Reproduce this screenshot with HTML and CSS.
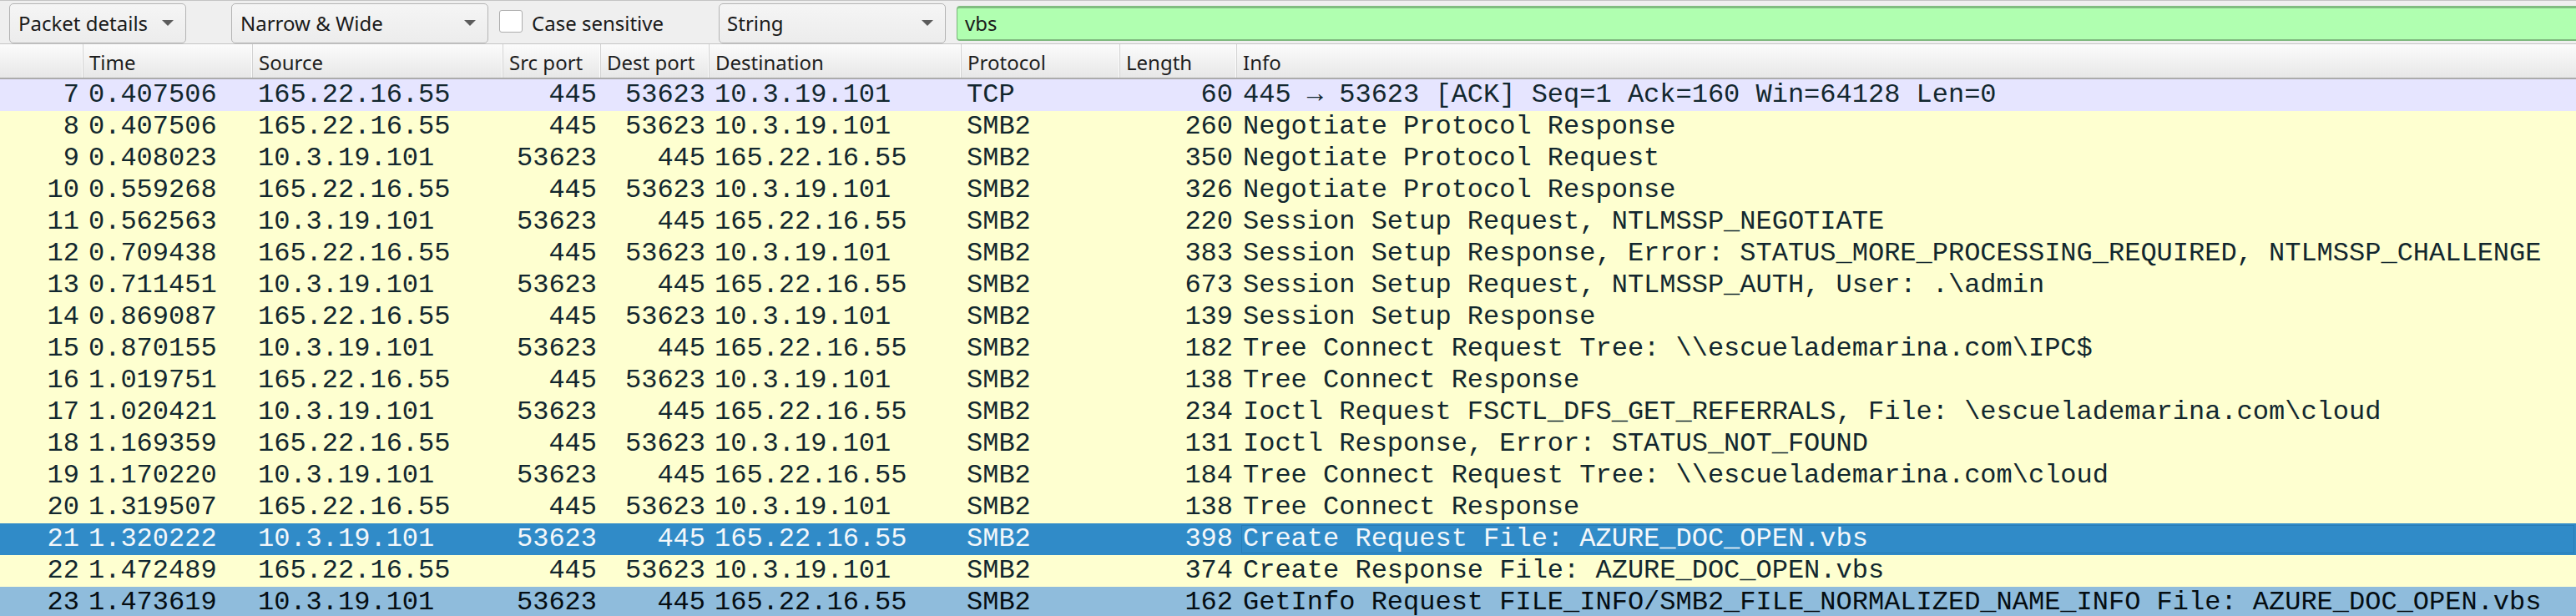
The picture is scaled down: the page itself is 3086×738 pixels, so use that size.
FILE: index.html
```html
<!DOCTYPE html>
<html>
<head>
<meta charset="utf-8">
<link rel="stylesheet" href="styles.css">
</head>
<body>
<div class="toolbar">
  <div class="combo combo-details"><span>Packet details</span><i class="arrow"></i></div>
  <div class="combo combo-charset"><span>Narrow &amp; Wide</span><i class="arrow"></i></div>
  <label class="check"><span class="box"></span><span>Case sensitive</span></label>
  <div class="combo combo-type"><span>String</span><i class="arrow"></i></div>
  <div class="search">vbs</div>
</div>
<div class="list">
  <div class="hdr cols">
    <div class="h"></div><div class="h">Time</div><div class="h">Source</div><div class="h">Src port</div><div class="h">Dest port</div><div class="h">Destination</div><div class="h">Protocol</div><div class="h">Length</div><div class="h">Info</div>
  </div>
  <div class="row cols tcp"><div class="r">7</div><div>0.407506</div><div>165.22.16.55</div><div class="r">445</div><div class="r">53623</div><div>10.3.19.101</div><div>TCP</div><div class="r">60</div><div class="info">445 → 53623 [ACK] Seq=1 Ack=160 Win=64128 Len=0</div></div>
  <div class="row cols smb"><div class="r">8</div><div>0.407506</div><div>165.22.16.55</div><div class="r">445</div><div class="r">53623</div><div>10.3.19.101</div><div>SMB2</div><div class="r">260</div><div class="info">Negotiate Protocol Response</div></div>
  <div class="row cols smb"><div class="r">9</div><div>0.408023</div><div>10.3.19.101</div><div class="r">53623</div><div class="r">445</div><div>165.22.16.55</div><div>SMB2</div><div class="r">350</div><div class="info">Negotiate Protocol Request</div></div>
  <div class="row cols smb"><div class="r">10</div><div>0.559268</div><div>165.22.16.55</div><div class="r">445</div><div class="r">53623</div><div>10.3.19.101</div><div>SMB2</div><div class="r">326</div><div class="info">Negotiate Protocol Response</div></div>
  <div class="row cols smb"><div class="r">11</div><div>0.562563</div><div>10.3.19.101</div><div class="r">53623</div><div class="r">445</div><div>165.22.16.55</div><div>SMB2</div><div class="r">220</div><div class="info">Session Setup Request, NTLMSSP_NEGOTIATE</div></div>
  <div class="row cols smb"><div class="r">12</div><div>0.709438</div><div>165.22.16.55</div><div class="r">445</div><div class="r">53623</div><div>10.3.19.101</div><div>SMB2</div><div class="r">383</div><div class="info">Session Setup Response, Error: STATUS_MORE_PROCESSING_REQUIRED, NTLMSSP_CHALLENGE</div></div>
  <div class="row cols smb"><div class="r">13</div><div>0.711451</div><div>10.3.19.101</div><div class="r">53623</div><div class="r">445</div><div>165.22.16.55</div><div>SMB2</div><div class="r">673</div><div class="info">Session Setup Request, NTLMSSP_AUTH, User: .\admin</div></div>
  <div class="row cols smb"><div class="r">14</div><div>0.869087</div><div>165.22.16.55</div><div class="r">445</div><div class="r">53623</div><div>10.3.19.101</div><div>SMB2</div><div class="r">139</div><div class="info">Session Setup Response</div></div>
  <div class="row cols smb"><div class="r">15</div><div>0.870155</div><div>10.3.19.101</div><div class="r">53623</div><div class="r">445</div><div>165.22.16.55</div><div>SMB2</div><div class="r">182</div><div class="info">Tree Connect Request Tree: \\escuelademarina.com\IPC$</div></div>
  <div class="row cols smb"><div class="r">16</div><div>1.019751</div><div>165.22.16.55</div><div class="r">445</div><div class="r">53623</div><div>10.3.19.101</div><div>SMB2</div><div class="r">138</div><div class="info">Tree Connect Response</div></div>
  <div class="row cols smb"><div class="r">17</div><div>1.020421</div><div>10.3.19.101</div><div class="r">53623</div><div class="r">445</div><div>165.22.16.55</div><div>SMB2</div><div class="r">234</div><div class="info">Ioctl Request FSCTL_DFS_GET_REFERRALS, File: \escuelademarina.com\cloud</div></div>
  <div class="row cols smb"><div class="r">18</div><div>1.169359</div><div>165.22.16.55</div><div class="r">445</div><div class="r">53623</div><div>10.3.19.101</div><div>SMB2</div><div class="r">131</div><div class="info">Ioctl Response, Error: STATUS_NOT_FOUND</div></div>
  <div class="row cols smb"><div class="r">19</div><div>1.170220</div><div>10.3.19.101</div><div class="r">53623</div><div class="r">445</div><div>165.22.16.55</div><div>SMB2</div><div class="r">184</div><div class="info">Tree Connect Request Tree: \\escuelademarina.com\cloud</div></div>
  <div class="row cols smb"><div class="r">20</div><div>1.319507</div><div>165.22.16.55</div><div class="r">445</div><div class="r">53623</div><div>10.3.19.101</div><div>SMB2</div><div class="r">138</div><div class="info">Tree Connect Response</div></div>
  <div class="row cols sel"><div class="r">21</div><div>1.320222</div><div>10.3.19.101</div><div class="r">53623</div><div class="r">445</div><div>165.22.16.55</div><div>SMB2</div><div class="r">398</div><div class="info">Create Request File: AZURE_DOC_OPEN.vbs</div></div>
  <div class="row cols smb"><div class="r">22</div><div>1.472489</div><div>165.22.16.55</div><div class="r">445</div><div class="r">53623</div><div>10.3.19.101</div><div>SMB2</div><div class="r">374</div><div class="info">Create Response File: AZURE_DOC_OPEN.vbs</div></div>
  <div class="row cols rel"><div class="r">23</div><div>1.473619</div><div>10.3.19.101</div><div class="r">53623</div><div class="r">445</div><div>165.22.16.55</div><div>SMB2</div><div class="r">162</div><div class="info">GetInfo Request FILE_INFO/SMB2_FILE_NORMALIZED_NAME_INFO File: AZURE_DOC_OPEN.vbs</div></div>
</div>
</body>
</html>
```
FILE: styles.css
```css
html, body {
  margin: 0;
  padding: 0;
  background: #efefef;
  overflow: hidden;
  height: 738px;
}
body {
  font-family: "Noto Sans", "Open Sans", sans-serif;
  color: #1a1a1a;
}
.toolbar {
  box-sizing: border-box;
  height: 52px;
  border-top: 1px solid #c4c4c4;
  padding: 2px 0 0 11px;
  display: flex;
  align-items: center;
  background: #efefef;
  font-size: 24px;
  overflow: hidden;
}
.combo {
  box-sizing: border-box;
  height: 48px;
  border: 1px solid #b4b4b4;
  border-radius: 5px;
  background: linear-gradient(#f5f5f5, #ececec);
  display: flex;
  align-items: center;
  justify-content: space-between;
  padding: 0 14px 0 10px;
  line-height: 33px;
}
.arrow {
  width: 0;
  height: 0;
  border-left: 7px solid transparent;
  border-right: 7px solid transparent;
  border-top: 7px solid #5c5c5c;
}
.combo-details { width: 212px; }
.combo-charset { width: 308px; margin-left: 54px; }
.combo-type { width: 272px; margin-left: 66px; padding-left: 9px; }
.check {
  display: flex;
  align-items: center;
  margin-left: 13px;
  line-height: 33px;
}
.box {
  box-sizing: border-box;
  width: 28px;
  height: 27px;
  border: 1px solid #adadad;
  border-radius: 3px;
  background: #fff;
  margin-right: 11px;
  margin-top: -4px;
}
.search {
  box-sizing: border-box;
  flex: 1;
  height: 42px;
  margin-left: 13px;
  margin-right: -12px;
  border: 1px solid #78b478;
  border-top: 3px solid #80bd80;
  border-bottom: 2px solid #7eb87e;
  border-radius: 4px;
  background: #b0ffb0;
  padding-left: 9px;
  line-height: 35px;
  color: #1a1a1a;
}
.cols {
  display: grid;
  grid-template-columns: 100px 203px 300px 117px 130px 302px 190px 140px 1fr;
}
.hdr {
  box-sizing: border-box;
  height: 43px;
  border-top: 1px solid #c4c4c4;
  border-bottom: 2px solid #ababab;
  background: linear-gradient(#fbfbfb, #e7e7e7);
  font-size: 24px;
  color: #1e1e1e;
}
.h {
  padding: 3px 0 0 7px;
  line-height: 37px;
  border-right: 1px solid #d2d2d2;
  box-shadow: inset -1px 0 0 #fdfdfd;
  white-space: nowrap;
  overflow: hidden;
}
.h:last-child { border-right: none; box-shadow: none; }
.row {
  height: 38px;
  font-family: "Liberation Mono", monospace;
  font-size: 32px;
  line-height: 38px;
  color: #12272e;
  white-space: nowrap;
}
.row > div {
  padding: 0 6px;
  overflow: hidden;
}
.row > .r {
  text-align: right;
  padding: 0 5px 0 0;
}
.row > .info {
  padding-left: 7px;
  overflow: visible;
}
.tcp { background: #e6e5ff; }
.smb { background: #feffd0; }
.sel { background: #308bc8; color: #f3f7fa; }
.sel > .info {
  outline: 1px solid #2a7cb6;
  outline-offset: -3px;
  margin-left: 3px;
  padding-left: 4px;
}
.rel { background: #8fbcdc; color: #050d12; }
```
